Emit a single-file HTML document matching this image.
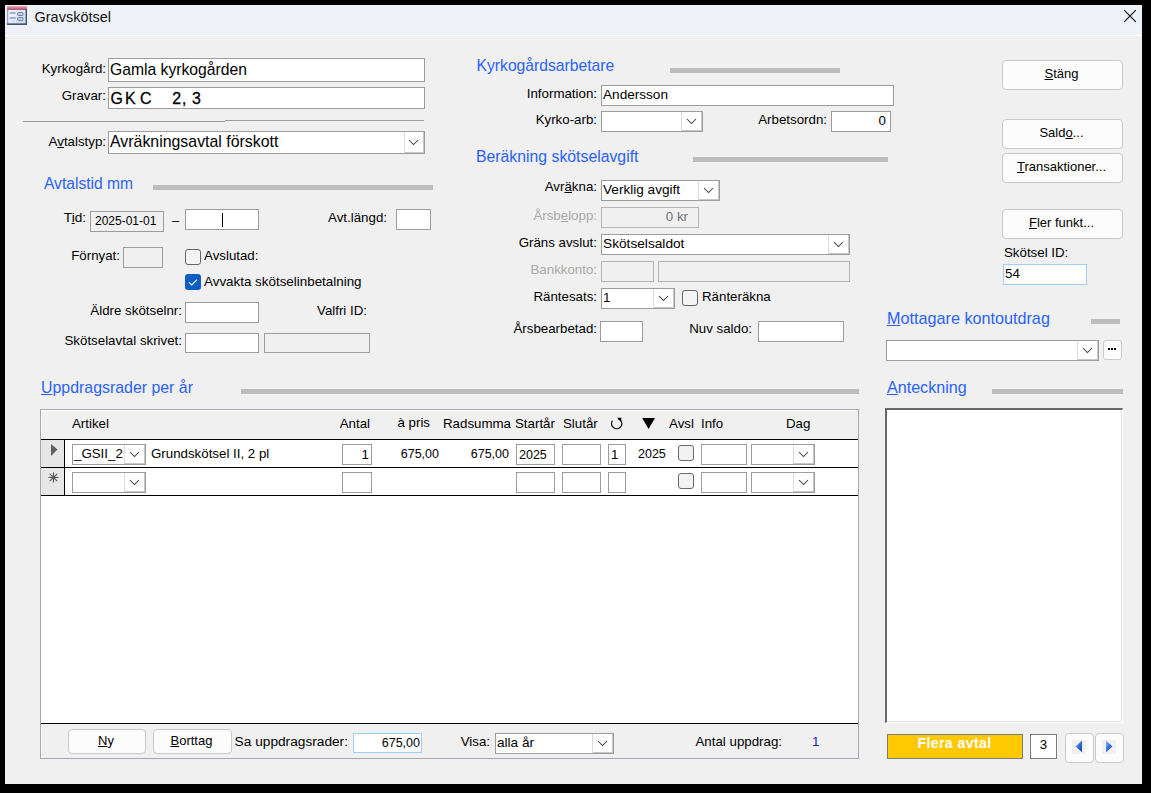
<!DOCTYPE html>
<html><head><meta charset="utf-8"><style>
html,body{margin:0;padding:0;width:1151px;height:793px;overflow:hidden;background:#000;}
.t{position:absolute;font-family:"Liberation Sans", sans-serif;white-space:nowrap;}
.r{position:absolute;box-sizing:border-box;}
u{text-decoration:underline;text-underline-offset:1px;}
</style></head><body>
<div class="r" style="left:5px;top:5px;width:1137px;height:30px;background:#eef2f8;"></div>
<div class="r" style="left:5px;top:35px;width:1137px;height:1px;background:#ffffff;"></div>
<div class="r" style="left:5px;top:36px;width:1137px;height:748px;background:#f0f0f0;"></div>
<svg style="position:absolute;left:7px;top:6px" width="20" height="19" viewBox="0 0 20 19"><defs><linearGradient id="ib" x1="0" y1="0" x2="1" y2="1"><stop offset="0" stop-color="#ffffff"/><stop offset="1" stop-color="#c4d4ee"/></linearGradient><linearGradient id="ih" x1="0" y1="0" x2="0" y2="1"><stop offset="0" stop-color="#e6a9bd"/><stop offset="1" stop-color="#b9496c"/></linearGradient></defs><rect x="0" y="0" width="20" height="19" fill="url(#ib)"/><rect x="0" y="0" width="20" height="4" fill="url(#ih)"/><rect x="0" y="4" width="1.2" height="15" fill="#8fa3c0"/><rect x="18.6" y="3" width="1.4" height="16" fill="#3f5270"/><rect x="0" y="17.4" width="20" height="1.6" fill="#3f5270"/><rect x="2.6" y="6.2" width="6" height="1.5" fill="#8aa0c8"/><rect x="2.6" y="11.2" width="6" height="1.5" fill="#8aa0c8"/><rect x="10.6" y="6.6" width="5.4" height="2.8" rx="0.6" fill="#ccd5e6" stroke="#6a7fa0" stroke-width="1"/><rect x="10.6" y="11.6" width="5.4" height="2.8" rx="0.6" fill="#ccd5e6" stroke="#6a7fa0" stroke-width="1"/></svg>
<div class="t" style="top:8.58px;font-size:14.5px;line-height:17px;color:#111;font-weight:normal;left:34.5px;">Gravskötsel</div>
<svg style="position:absolute;left:1123px;top:9px" width="15" height="15" viewBox="0 0 15 15"><path d="M1.2 1.2 L12.8 12.8 M12.8 1.2 L1.2 12.8" stroke="#111" stroke-width="1.2" fill="none"/></svg>
<div class="t" style="top:60.59px;font-size:13.3px;line-height:16px;color:#000;font-weight:normal;right:1045px;">Kyrkogård:</div>
<div class="r" style="left:108px;top:58px;width:317px;height:24px;background:#fff;border:1px solid #9c9c9c;"></div>
<div class="t" style="top:59.56px;font-size:15.7px;line-height:19px;color:#000;font-weight:normal;left:110px;">Gamla kyrkogården</div>
<div class="t" style="top:87.89px;font-size:13.3px;line-height:16px;color:#000;font-weight:normal;right:1045px;">Gravar:</div>
<div class="r" style="left:108px;top:87px;width:317px;height:22px;background:#fff;border:1px solid #9c9c9c;"></div>
<div class="t" style="top:89.39px;font-size:15.9px;line-height:19px;color:#000;font-weight:normal;left:110.5px;-webkit-text-stroke:0.3px #000;">G</div>
<div class="t" style="top:89.39px;font-size:15.9px;line-height:19px;color:#000;font-weight:normal;left:125px;-webkit-text-stroke:0.3px #000;">K</div>
<div class="t" style="top:89.39px;font-size:15.9px;line-height:19px;color:#000;font-weight:normal;left:140px;-webkit-text-stroke:0.3px #000;">C</div>
<div class="t" style="top:89.39px;font-size:15.9px;line-height:19px;color:#000;font-weight:normal;left:172.3px;-webkit-text-stroke:0.3px #000;">2</div>
<div class="t" style="top:89.39px;font-size:15.9px;line-height:19px;color:#000;font-weight:normal;left:182px;-webkit-text-stroke:0.3px #000;">,</div>
<div class="t" style="top:89.39px;font-size:15.9px;line-height:19px;color:#000;font-weight:normal;left:192px;-webkit-text-stroke:0.3px #000;">3</div>
<div class="r" style="left:23px;top:121px;width:202px;height:1px;background:#9c9c9c;"></div>
<div class="r" style="left:225px;top:120px;width:199px;height:1px;background:#9c9c9c;"></div>
<div class="t" style="top:134.09px;font-size:13.3px;line-height:16px;color:#000;font-weight:normal;right:1045px;">A<u>v</u>talstyp:</div>
<div class="r" style="left:108px;top:131px;width:317px;height:23px;background:#fff;border:1px solid #9c9c9c;"></div>
<div class="r" style="left:404px;top:132px;width:20px;height:21px;background:#fff;border-left:1px solid #dcdcdc;box-shadow:inset -1px -1px 0 #c8c8c8;display:flex;align-items:center;justify-content:center;"><svg width="11" height="7" viewBox="0 0 11 7" style="margin-right:2px"><path d="M1 1 L5.5 5.5 L10 1" fill="none" stroke="#3c3c3c" stroke-width="1.05"/></svg></div>
<div class="t" style="top:131.69px;font-size:15.9px;line-height:19px;color:#000;font-weight:normal;left:110px;">Avräkningsavtal förskott</div>
<div class="t" style="top:173.99px;font-size:15.6px;line-height:19px;color:#2a62fa;font-weight:normal;left:44px;">Avtalstid mm</div>
<div class="r" style="left:153px;top:185px;width:280px;height:5px;background:#bdbdbd;"></div>
<div class="t" style="top:210.39px;font-size:13.6px;line-height:16px;color:#000;font-weight:normal;right:1065px;">T<u>i</u>d:</div>
<div class="r" style="left:90px;top:211px;width:74px;height:21px;background:#f0f0f0;border:1px solid #9c9c9c;"></div>
<div class="t" style="top:213.64px;font-size:12px;line-height:14px;color:#000;font-weight:normal;left:95px;">2025-01-01</div>
<div class="t" style="top:212.60px;font-size:13px;line-height:16px;color:#000;font-weight:normal;left:172px;">–</div>
<div class="r" style="left:185px;top:209px;width:74px;height:21px;background:#fff;border:1px solid #9c9c9c;"></div>
<div class="r" style="left:222px;top:213px;width:1px;height:14px;background:#000;"></div>
<div class="t" style="top:209.89px;font-size:13.3px;line-height:16px;color:#000;font-weight:normal;right:764px;">Avt.längd:</div>
<div class="r" style="left:396px;top:209px;width:35px;height:21px;background:#fff;border:1px solid #9c9c9c;"></div>
<div class="t" style="top:247.69px;font-size:13.3px;line-height:16px;color:#000;font-weight:normal;right:1031px;">Förnyat:</div>
<div class="r" style="left:123px;top:247px;width:40px;height:21px;background:#f0f0f0;border:1px solid #9c9c9c;"></div>
<div class="r" style="left:185px;top:249px;width:16px;height:16px;background:#f4f4f4;border:1px solid #646464;border-radius:3px;"></div>
<div class="t" style="top:248.49px;font-size:13.3px;line-height:16px;color:#000;font-weight:normal;left:204px;">Avslutad:</div>
<div class="r" style="left:185px;top:274px;width:16px;height:16px;background:#0c5dc4;border-radius:3px;"><svg width="16" height="16" style="position:absolute;left:0;top:0"><path d="M4 8.4 L6.8 11 L12 5.6" fill="none" stroke="#fff" stroke-width="1.2"/></svg></div>
<div class="t" style="top:274.36px;font-size:13.4px;line-height:16px;color:#000;font-weight:normal;left:204px;">Avvakta skötselinbetalning</div>
<div class="t" style="top:303.09px;font-size:13.3px;line-height:16px;color:#000;font-weight:normal;right:969px;">Äldre skötselnr:</div>
<div class="r" style="left:185px;top:302px;width:74px;height:21px;background:#fff;border:1px solid #9c9c9c;"></div>
<div class="t" style="top:303.09px;font-size:13.3px;line-height:16px;color:#000;font-weight:normal;right:784px;">Valfri ID:</div>
<div class="t" style="top:332.89px;font-size:13.3px;line-height:16px;color:#000;font-weight:normal;right:969px;">Skötselavtal skrivet:</div>
<div class="r" style="left:185px;top:333px;width:74px;height:20px;background:#fff;border:1px solid #9c9c9c;"></div>
<div class="r" style="left:264px;top:333px;width:106px;height:20px;background:#f0f0f0;border:1px solid #9c9c9c;"></div>
<div class="t" style="top:56.06px;font-size:15.7px;line-height:19px;color:#2a62fa;font-weight:normal;left:476.5px;">Kyrkogårdsarbetare</div>
<div class="r" style="left:670px;top:68px;width:170px;height:5px;background:#bdbdbd;"></div>
<div class="t" style="top:85.99px;font-size:13.3px;line-height:16px;color:#000;font-weight:normal;right:554px;">Information:</div>
<div class="r" style="left:601px;top:85px;width:293px;height:21px;background:#fff;border:1px solid #9c9c9c;"></div>
<div class="t" style="top:87.09px;font-size:13.6px;line-height:16px;color:#000;font-weight:normal;left:603px;">Andersson</div>
<div class="t" style="top:111.69px;font-size:13.3px;line-height:16px;color:#000;font-weight:normal;right:554px;">Kyrko-arb:</div>
<div class="r" style="left:601px;top:111px;width:102px;height:21px;background:#fff;border:1px solid #9c9c9c;"></div>
<div class="r" style="left:681px;top:112px;width:21px;height:19px;background:#fff;border-left:1px solid #dcdcdc;box-shadow:inset -1px -1px 0 #c8c8c8;display:flex;align-items:center;justify-content:center;"><svg width="11" height="7" viewBox="0 0 11 7" style="margin-right:2px"><path d="M1 1 L5.5 5.5 L10 1" fill="none" stroke="#3c3c3c" stroke-width="1.05"/></svg></div>
<div class="t" style="top:111.69px;font-size:13.3px;line-height:16px;color:#000;font-weight:normal;right:324px;">Arbetsordn:</div>
<div class="r" style="left:831px;top:111px;width:60px;height:21px;background:#fff;border:1px solid #9c9c9c;"></div>
<div class="t" style="top:112.79px;font-size:13.3px;line-height:16px;color:#000;font-weight:normal;right:265px;">0</div>
<div class="t" style="top:146.63px;font-size:15.8px;line-height:19px;color:#2a62fa;font-weight:normal;left:476px;">Beräkning skötselavgift</div>
<div class="r" style="left:693px;top:157px;width:195px;height:5px;background:#bdbdbd;"></div>
<div class="t" style="top:179.29px;font-size:13.3px;line-height:16px;color:#000;font-weight:normal;right:554px;">Avr<u>ä</u>kna:</div>
<div class="r" style="left:601px;top:180px;width:119px;height:21px;background:#fff;border:1px solid #9c9c9c;"></div>
<div class="r" style="left:698px;top:181px;width:21px;height:19px;background:#fff;border-left:1px solid #dcdcdc;box-shadow:inset -1px -1px 0 #c8c8c8;display:flex;align-items:center;justify-content:center;"><svg width="11" height="7" viewBox="0 0 11 7" style="margin-right:2px"><path d="M1 1 L5.5 5.5 L10 1" fill="none" stroke="#3c3c3c" stroke-width="1.05"/></svg></div>
<div class="t" style="top:181.89px;font-size:13.6px;line-height:16px;color:#000;font-weight:normal;left:603px;">Verklig avgift</div>
<div class="t" style="top:207.99px;font-size:13.3px;line-height:16px;color:#a8a8a8;font-weight:normal;right:554px;">Årsb<u>e</u>lopp:</div>
<div class="r" style="left:601px;top:207px;width:98px;height:21px;background:#f0f0f0;border:1px solid #b4b4b4;"></div>
<div class="t" style="top:208.79px;font-size:13.3px;line-height:16px;color:#707070;font-weight:normal;right:463px;">0 kr</div>
<div class="t" style="top:234.79px;font-size:13.3px;line-height:16px;color:#000;font-weight:normal;right:554px;">Gräns avslut:</div>
<div class="r" style="left:601px;top:234px;width:249px;height:21px;background:#fff;border:1px solid #9c9c9c;"></div>
<div class="r" style="left:828px;top:235px;width:21px;height:19px;background:#fff;border-left:1px solid #dcdcdc;box-shadow:inset -1px -1px 0 #c8c8c8;display:flex;align-items:center;justify-content:center;"><svg width="11" height="7" viewBox="0 0 11 7" style="margin-right:2px"><path d="M1 1 L5.5 5.5 L10 1" fill="none" stroke="#3c3c3c" stroke-width="1.05"/></svg></div>
<div class="t" style="top:235.65px;font-size:13.7px;line-height:16px;color:#000;font-weight:normal;left:603px;">Skötselsaldot</div>
<div class="t" style="top:262.29px;font-size:13.3px;line-height:16px;color:#a8a8a8;font-weight:normal;right:554px;">Bankkonto:</div>
<div class="r" style="left:601px;top:261px;width:53px;height:21px;background:#f0f0f0;border:1px solid #b4b4b4;"></div>
<div class="r" style="left:658px;top:261px;width:192px;height:21px;background:#f0f0f0;border:1px solid #b4b4b4;"></div>
<div class="t" style="top:289.39px;font-size:13.3px;line-height:16px;color:#000;font-weight:normal;right:554px;">Räntesats:</div>
<div class="r" style="left:601px;top:288px;width:74px;height:21px;background:#fff;border:1px solid #9c9c9c;"></div>
<div class="r" style="left:653px;top:289px;width:21px;height:19px;background:#fff;border-left:1px solid #dcdcdc;box-shadow:inset -1px -1px 0 #c8c8c8;display:flex;align-items:center;justify-content:center;"><svg width="11" height="7" viewBox="0 0 11 7" style="margin-right:2px"><path d="M1 1 L5.5 5.5 L10 1" fill="none" stroke="#3c3c3c" stroke-width="1.05"/></svg></div>
<div class="t" style="top:290.29px;font-size:13.3px;line-height:16px;color:#000;font-weight:normal;left:603px;">1</div>
<div class="r" style="left:682px;top:290px;width:16px;height:16px;background:#f4f4f4;border:1px solid #646464;border-radius:3px;"></div>
<div class="t" style="top:288.99px;font-size:13.3px;line-height:16px;color:#000;font-weight:normal;left:702px;">Ränteräkna</div>
<div class="t" style="top:320.79px;font-size:13.3px;line-height:16px;color:#000;font-weight:normal;right:554px;">Årsbearbetad:</div>
<div class="r" style="left:600px;top:321px;width:43px;height:21px;background:#fff;border:1px solid #9c9c9c;"></div>
<div class="t" style="top:320.79px;font-size:13.3px;line-height:16px;color:#000;font-weight:normal;right:399px;">Nuv saldo:</div>
<div class="r" style="left:758px;top:321px;width:86px;height:21px;background:#fff;border:1px solid #9c9c9c;"></div>
<div class="r" style="left:1002px;top:60px;width:121px;height:30px;background:#fcfcfc;border:1px solid #c9c9c9;border-radius:4px;"></div>
<div class="t" style="top:66.10px;font-size:13px;line-height:16px;color:#000;font-weight:normal;left:861.5px;width:400px;text-align:center;"><u>S</u>täng</div>
<div class="r" style="left:1002px;top:119px;width:121px;height:30px;background:#fcfcfc;border:1px solid #c9c9c9;border-radius:4px;"></div>
<div class="t" style="top:125.10px;font-size:13px;line-height:16px;color:#000;font-weight:normal;left:861.5px;width:400px;text-align:center;">Sald<u>o</u>...</div>
<div class="r" style="left:1002px;top:153px;width:121px;height:30px;background:#fcfcfc;border:1px solid #c9c9c9;border-radius:4px;"></div>
<div class="t" style="top:159.10px;font-size:13px;line-height:16px;color:#000;font-weight:normal;left:861.5px;width:400px;text-align:center;"><u>T</u>ransaktioner...</div>
<div class="r" style="left:1002px;top:209px;width:121px;height:30px;background:#fcfcfc;border:1px solid #c9c9c9;border-radius:4px;"></div>
<div class="t" style="top:215.10px;font-size:13px;line-height:16px;color:#000;font-weight:normal;left:861.5px;width:400px;text-align:center;"><u>F</u>ler funkt...</div>
<div class="t" style="top:244.79px;font-size:13.3px;line-height:16px;color:#000;font-weight:normal;left:1004px;">Skötsel ID:</div>
<div class="r" style="left:1003px;top:264px;width:84px;height:21px;background:#fff;border:1px solid #a2cdf6;"></div>
<div class="t" style="top:265.79px;font-size:13.3px;line-height:16px;color:#000;font-weight:normal;left:1005px;">54</div>
<div class="t" style="top:308.89px;font-size:16.2px;line-height:19px;color:#2a62fa;font-weight:normal;left:887px;"><u>M</u>ottagare kontoutdrag</div>
<div class="r" style="left:1091px;top:319px;width:29px;height:5px;background:#bdbdbd;"></div>
<div class="r" style="left:886px;top:340px;width:213px;height:21px;background:#fff;border:1px solid #9c9c9c;"></div>
<div class="r" style="left:1077px;top:341px;width:21px;height:19px;background:#fff;border-left:1px solid #dcdcdc;box-shadow:inset -1px -1px 0 #c8c8c8;display:flex;align-items:center;justify-content:center;"><svg width="11" height="7" viewBox="0 0 11 7" style="margin-right:2px"><path d="M1 1 L5.5 5.5 L10 1" fill="none" stroke="#3c3c3c" stroke-width="1.05"/></svg></div>
<div class="r" style="left:1103px;top:340px;width:19px;height:20px;background:#fcfcfc;border:1px solid #c9c9c9;border-radius:3px;"><svg width="19" height="20" style="position:absolute;left:0;top:0"><rect x="4" y="7" width="2" height="2" fill="#000"/><rect x="7" y="7" width="2" height="2" fill="#000"/><rect x="10" y="7" width="2" height="2" fill="#000"/></svg></div>
<div class="t" style="top:377.92px;font-size:16.1px;line-height:19px;color:#2a62fa;font-weight:normal;left:887px;"><u>A</u>nteckning</div>
<div class="r" style="left:992px;top:389px;width:131px;height:5px;background:#bdbdbd;"></div>
<div class="r" style="left:885px;top:408px;width:238px;height:315px;background:#fff;border-top:2px solid #686868;border-left:2px solid #686868;border-right:1px solid #fff;border-bottom:1px solid #fff;box-shadow:inset -1px -1px 0 #e2e2e2;"></div>
<div class="r" style="left:887px;top:734px;width:136px;height:25px;background:#ffc800;border:1px solid #7c7c7c;"></div>
<div class="t" style="top:735.31px;font-size:14.1px;line-height:17px;color:#fff;font-weight:bold;letter-spacing:0.4px;left:754.5px;width:400px;text-align:center;">Flera avtal</div>
<div class="r" style="left:1030px;top:734px;width:27px;height:25px;background:#fff;border:1px solid #7c7c7c;"></div>
<div class="t" style="top:737.49px;font-size:13.3px;line-height:16px;color:#000;font-weight:normal;left:843.5px;width:400px;text-align:center;">3</div>
<div class="r" style="left:1065px;top:733px;width:29px;height:30px;background:#fcfcfc;border:1px solid #c9c9c9;border-radius:4px;"><svg width="29" height="30" style="position:absolute;left:0;top:0"><defs><linearGradient id="nl" x1="0" y1="0" x2="1" y2="1"><stop offset="0" stop-color="#8ab8ff"/><stop offset="0.55" stop-color="#2e66dc"/><stop offset="1" stop-color="#1a3fa8"/></linearGradient></defs><rect x="6" y="6" width="14" height="14" fill="#f1f1ed"/><path d="M9.6 12.5 L16 6.6 L16 18.2 Z" fill="url(#nl)"/></svg></div>
<div class="r" style="left:1095px;top:733px;width:29px;height:30px;background:#fcfcfc;border:1px solid #c9c9c9;border-radius:4px;"><svg width="29" height="30" style="position:absolute;left:0;top:0"><defs><linearGradient id="nr" x1="0" y1="0" x2="1" y2="1"><stop offset="0" stop-color="#8ab8ff"/><stop offset="0.55" stop-color="#2e66dc"/><stop offset="1" stop-color="#1a3fa8"/></linearGradient></defs><rect x="6" y="6" width="14" height="14" fill="#f1f1ed"/><path d="M16.4 12.5 L10 6.6 L10 18.2 Z" fill="url(#nr)"/></svg></div>
<div class="t" style="top:377.89px;font-size:15.9px;line-height:19px;color:#2a62fa;font-weight:normal;left:41px;"><u>U</u>ppdragsrader per år</div>
<div class="r" style="left:241px;top:389px;width:618px;height:5px;background:#bdbdbd;"></div>
<div class="r" style="left:40px;top:409px;width:819px;height:350px;background:#f0f0f0;border:1px solid #a4a7ae;box-shadow:inset 1px 1px 0 #fff;"></div>
<div class="r" style="left:41px;top:439px;width:817px;height:1px;background:#000;"></div>
<div class="t" style="top:416.29px;font-size:13.3px;line-height:16px;color:#000;font-weight:normal;left:72px;">Artikel</div>
<div class="t" style="top:416.29px;font-size:13.3px;line-height:16px;color:#000;font-weight:normal;right:781px;">Antal</div>
<div class="t" style="top:415.29px;font-size:13.3px;line-height:16px;color:#000;font-weight:normal;right:721px;">à pris</div>
<div class="t" style="top:416.29px;font-size:13.3px;line-height:16px;color:#000;font-weight:normal;right:640px;">Radsumma</div>
<div class="t" style="top:416.29px;font-size:13.3px;line-height:16px;color:#000;font-weight:normal;left:515px;">Startår</div>
<div class="t" style="top:416.29px;font-size:13.3px;line-height:16px;color:#000;font-weight:normal;left:563px;">Slutår</div>
<svg style="position:absolute;left:609px;top:416px" width="14" height="14" viewBox="0 0 14 14"><path d="M3.4 4.6 A5.2 5.2 0 1 0 9.2 2.6" fill="none" stroke="#000" stroke-width="1.15"/><path d="M8.2 1.8 L12.4 1.8 L12 6 Z" fill="#000"/></svg>
<svg style="position:absolute;left:642px;top:417px" width="14" height="13" viewBox="0 0 14 13"><path d="M0.2 1 L13 1 L6.6 12 Z" fill="#000"/></svg>
<div class="t" style="top:416.29px;font-size:13.3px;line-height:16px;color:#000;font-weight:normal;left:669px;">Avsl</div>
<div class="t" style="top:416.29px;font-size:13.3px;line-height:16px;color:#000;font-weight:normal;left:701px;">Info</div>
<div class="t" style="top:416.29px;font-size:13.3px;line-height:16px;color:#000;font-weight:normal;left:786px;">Dag</div>
<div class="r" style="left:41px;top:440px;width:817px;height:283px;background:#fff;"></div>
<div class="r" style="left:41px;top:440px;width:23px;height:55px;background:#e6e6e6;"></div>
<div class="r" style="left:64px;top:440px;width:1px;height:55px;background:#000;"></div>
<div class="r" style="left:41px;top:467px;width:817px;height:1px;background:#000;"></div>
<div class="r" style="left:41px;top:495px;width:817px;height:1px;background:#000;"></div>
<div class="r" style="left:41px;top:723px;width:817px;height:1px;background:#000;"></div>
<svg style="position:absolute;left:50px;top:443px" width="9" height="14"><path d="M1 1 L7.5 6.5 L1 13 Z" fill="#606060"/></svg>
<svg style="position:absolute;left:48px;top:472px" width="11" height="11" viewBox="0 0 11 11"><path d="M5.5 0.5 V10.5 M0.5 5.5 H10.5 M1.8 1.8 L9.2 9.2 M9.2 1.8 L1.8 9.2" stroke="#555" stroke-width="1.1"/></svg>
<div class="r" style="left:72px;top:444px;width:74px;height:21px;background:#fff;border:1px solid #9c9c9c;"></div>
<div class="r" style="left:124px;top:445px;width:21px;height:19px;background:#fff;border-left:1px solid #dcdcdc;box-shadow:inset -1px -1px 0 #c8c8c8;display:flex;align-items:center;justify-content:center;"><svg width="11" height="7" viewBox="0 0 11 7" style="margin-right:2px"><path d="M1 1 L5.5 5.5 L10 1" fill="none" stroke="#3c3c3c" stroke-width="1.05"/></svg></div>
<div class="t" style="top:446.29px;font-size:13.3px;line-height:16px;color:#000;font-weight:normal;left:74px;">_GSII_2</div>
<div class="t" style="top:446.29px;font-size:13.3px;line-height:16px;color:#000;font-weight:normal;left:151px;">Grundskötsel II, 2 pl</div>
<div class="r" style="left:342px;top:444px;width:30px;height:21px;background:#fff;border:1px solid #9c9c9c;"></div>
<div class="t" style="top:446.79px;font-size:13.3px;line-height:16px;color:#000;font-weight:normal;right:782px;">1</div>
<div class="t" style="top:447.37px;font-size:12.5px;line-height:15px;color:#000;font-weight:normal;right:712px;">675,00</div>
<div class="t" style="top:447.37px;font-size:12.5px;line-height:15px;color:#000;font-weight:normal;right:642px;">675,00</div>
<div class="r" style="left:516px;top:444px;width:39px;height:21px;background:#fff;border:1px solid #9c9c9c;"></div>
<div class="t" style="top:447.57px;font-size:12.5px;line-height:15px;color:#000;font-weight:normal;left:519px;">2025</div>
<div class="r" style="left:562px;top:444px;width:39px;height:21px;background:#fff;border:1px solid #9c9c9c;"></div>
<div class="r" style="left:608px;top:444px;width:18px;height:21px;background:#fff;border:1px solid #9c9c9c;"></div>
<div class="t" style="top:446.79px;font-size:13.3px;line-height:16px;color:#000;font-weight:normal;left:611px;">1</div>
<div class="t" style="top:447.37px;font-size:12.5px;line-height:15px;color:#000;font-weight:normal;left:638px;">2025</div>
<div class="r" style="left:678px;top:445px;width:16px;height:16px;background:#f2f2f2;border:1px solid #6a6a6a;border-radius:3px;"></div>
<div class="r" style="left:701px;top:444px;width:46px;height:21px;background:#fff;border:1px solid #9c9c9c;"></div>
<div class="r" style="left:751px;top:444px;width:64px;height:21px;background:#fff;border:1px solid #9c9c9c;"></div>
<div class="r" style="left:793px;top:445px;width:21px;height:19px;background:#fff;border-left:1px solid #dcdcdc;box-shadow:inset -1px -1px 0 #c8c8c8;display:flex;align-items:center;justify-content:center;"><svg width="11" height="7" viewBox="0 0 11 7" style="margin-right:2px"><path d="M1 1 L5.5 5.5 L10 1" fill="none" stroke="#3c3c3c" stroke-width="1.05"/></svg></div>
<div class="r" style="left:72px;top:472px;width:74px;height:21px;background:#fff;border:1px solid #9c9c9c;"></div>
<div class="r" style="left:124px;top:473px;width:21px;height:19px;background:#fff;border-left:1px solid #dcdcdc;box-shadow:inset -1px -1px 0 #c8c8c8;display:flex;align-items:center;justify-content:center;"><svg width="11" height="7" viewBox="0 0 11 7" style="margin-right:2px"><path d="M1 1 L5.5 5.5 L10 1" fill="none" stroke="#3c3c3c" stroke-width="1.05"/></svg></div>
<div class="r" style="left:342px;top:472px;width:30px;height:21px;background:#fff;border:1px solid #9c9c9c;"></div>
<div class="r" style="left:516px;top:472px;width:39px;height:21px;background:#fff;border:1px solid #9c9c9c;"></div>
<div class="r" style="left:562px;top:472px;width:39px;height:21px;background:#fff;border:1px solid #9c9c9c;"></div>
<div class="r" style="left:608px;top:472px;width:18px;height:21px;background:#fff;border:1px solid #9c9c9c;"></div>
<div class="r" style="left:678px;top:473px;width:16px;height:16px;background:#f2f2f2;border:1px solid #6a6a6a;border-radius:3px;"></div>
<div class="r" style="left:701px;top:472px;width:46px;height:21px;background:#fff;border:1px solid #9c9c9c;"></div>
<div class="r" style="left:751px;top:472px;width:64px;height:21px;background:#fff;border:1px solid #9c9c9c;"></div>
<div class="r" style="left:793px;top:473px;width:21px;height:19px;background:#fff;border-left:1px solid #dcdcdc;box-shadow:inset -1px -1px 0 #c8c8c8;display:flex;align-items:center;justify-content:center;"><svg width="11" height="7" viewBox="0 0 11 7" style="margin-right:2px"><path d="M1 1 L5.5 5.5 L10 1" fill="none" stroke="#3c3c3c" stroke-width="1.05"/></svg></div>
<div class="r" style="left:68px;top:729px;width:78px;height:25px;background:#fcfcfc;border:1px solid #c9c9c9;border-radius:4px;"></div>
<div class="t" style="top:732.60px;font-size:13px;line-height:16px;color:#000;font-weight:normal;left:-94.0px;width:400px;text-align:center;"><u>N</u>y</div>
<div class="r" style="left:153px;top:729px;width:79px;height:25px;background:#fcfcfc;border:1px solid #c9c9c9;border-radius:4px;"></div>
<div class="t" style="top:732.60px;font-size:13px;line-height:16px;color:#000;font-weight:normal;left:-8.5px;width:400px;text-align:center;"><u>B</u>orttag</div>
<div class="t" style="top:733.65px;font-size:13.7px;line-height:16px;color:#000;font-weight:normal;right:803px;">Sa uppdragsrader:</div>
<div class="r" style="left:353px;top:733px;width:69px;height:20px;background:#fff;border:1px solid #a2cdf6;"></div>
<div class="t" style="top:735.57px;font-size:12.5px;line-height:15px;color:#000;font-weight:normal;right:731px;">675,00</div>
<div class="t" style="top:733.79px;font-size:13.3px;line-height:16px;color:#000;font-weight:normal;right:661px;">Visa:</div>
<div class="r" style="left:495px;top:733px;width:119px;height:21px;background:#fff;border:1px solid #9c9c9c;"></div>
<div class="r" style="left:592px;top:734px;width:21px;height:19px;background:#fff;border-left:1px solid #dcdcdc;box-shadow:inset -1px -1px 0 #c8c8c8;display:flex;align-items:center;justify-content:center;"><svg width="11" height="7" viewBox="0 0 11 7" style="margin-right:2px"><path d="M1 1 L5.5 5.5 L10 1" fill="none" stroke="#3c3c3c" stroke-width="1.05"/></svg></div>
<div class="t" style="top:735.19px;font-size:13.6px;line-height:16px;color:#000;font-weight:normal;left:497px;">alla år</div>
<div class="t" style="top:733.79px;font-size:13.3px;line-height:16px;color:#000;font-weight:normal;right:369px;">Antal uppdrag:</div>
<div class="t" style="top:733.79px;font-size:13.3px;line-height:16px;color:#1c1cc8;font-weight:normal;left:812px;">1</div>
</body></html>
